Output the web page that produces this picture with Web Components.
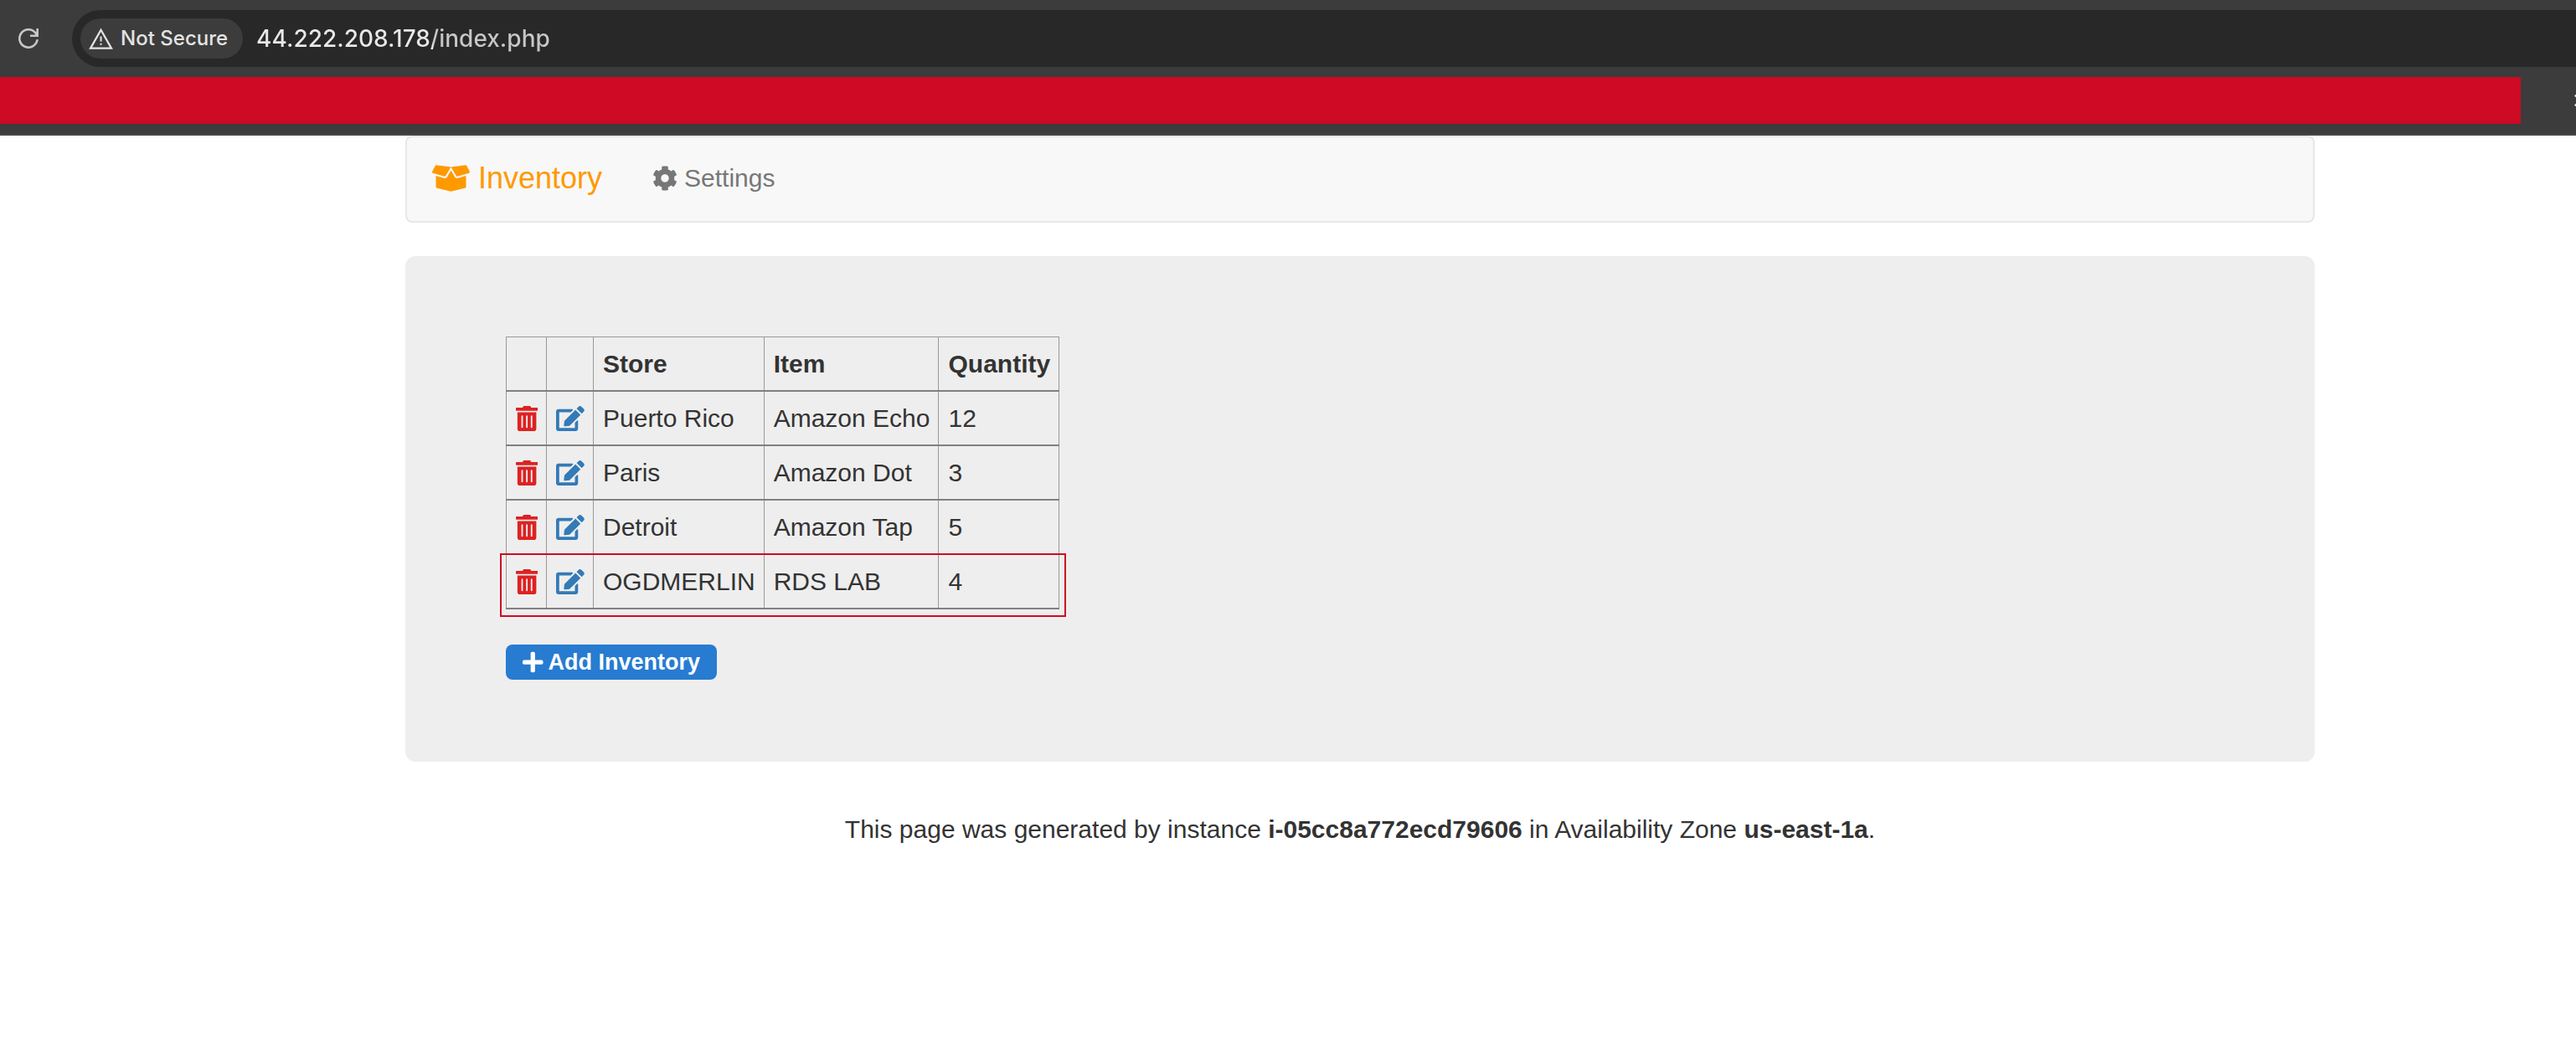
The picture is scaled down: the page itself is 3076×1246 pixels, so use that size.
<!DOCTYPE html>
<html lang="en">
<head>
<meta charset="utf-8">
<title>Inventory</title>
<style>
  body { margin: 0; background: #fff; color: #333; font: 30px/43px "Liberation Sans", Arial, sans-serif; }
</style>
</head>
<body>
<inventory-app></inventory-app>
<script>
const ICONS = {
  box: ['0 0 640 512', '<path d="M425.7 256c-16.9 0-32.8-9-41.4-23.4L320 126l-64.2 106.6c-8.7 14.5-24.6 23.5-41.5 23.5-4.5 0-9-.6-13.3-1.9L64 215v178c0 14.7 10 27.5 24.2 31l216.2 54.1c10.2 2.5 20.9 2.5 31 0L551.8 424c14.2-3.6 24.2-16.4 24.2-31V215l-137 39.1c-4.3 1.3-8.8 1.9-13.3 1.9zm212.6-112.2L586.8 41c-3.1-6.2-9.8-9.8-16.7-8.9L320 64l91.7 152.1c3.8 6.3 11.4 9.3 18.5 7.3l197.9-56.5c9.9-2.9 14.7-13.9 10.2-23.1zM53.2 41L1.7 143.8c-4.6 9.2.3 20.2 10.1 23l197.9 56.5c7.1 2 14.7-1 18.5-7.3L320 64 69.8 32.1c-6.9-.8-13.5 2.7-16.6 8.9z"/>'],
  cog: ['0 0 512 512', '<path d="M487.4 315.7l-42.6-24.6c4.3-23.2 4.3-47 0-70.2l42.6-24.6c4.9-2.8 7.1-8.6 5.5-14-11.1-35.6-30-67.8-54.7-94.6-3.8-4.1-10-5.1-14.8-2.3L380.8 110c-17.9-15.4-38.5-27.3-60.8-35.1V25.8c0-5.6-3.9-10.5-9.4-11.7-36.7-8.2-74.3-7.8-109.2 0-5.5 1.2-9.4 6.1-9.4 11.7V75c-22.2 7.9-42.8 19.8-60.8 35.1L88.7 85.5c-4.9-2.8-11-1.9-14.8 2.3-24.7 26.7-43.6 58.9-54.7 94.6-1.7 5.4.6 11.2 5.5 14L67.3 221c-4.3 23.2-4.3 47 0 70.2l-42.6 24.6c-4.9 2.8-7.1 8.6-5.5 14 11.1 35.6 30 67.8 54.7 94.6 3.8 4.1 10 5.1 14.8 2.3l42.6-24.6c17.9 15.4 38.5 27.3 60.8 35.1v49.2c0 5.6 3.9 10.5 9.4 11.7 36.7 8.2 74.3 7.8 109.2 0 5.5-1.2 9.4-6.1 9.4-11.7v-49.2c22.2-7.9 42.8-19.8 60.8-35.1l42.6 24.6c4.9 2.8 11 1.9 14.8-2.3 24.7-26.7 43.6-58.9 54.7-94.6 1.5-5.5-.7-11.3-5.6-14.1zM256 336c-44.1 0-80-35.9-80-80s35.9-80 80-80 80 35.9 80 80-35.9 80-80 80z"/>'],
  trash: ['0 0 448 512', '<path d="M32 464a48 48 0 0 0 48 48h288a48 48 0 0 0 48-48V128H32zm272-256a16 16 0 0 1 32 0v224a16 16 0 0 1-32 0zm-96 0a16 16 0 0 1 32 0v224a16 16 0 0 1-32 0zm-96 0a16 16 0 0 1 32 0v224a16 16 0 0 1-32 0zM432 32H312l-9.4-18.7A24 24 0 0 0 281.1 0H166.8a23.72 23.72 0 0 0-21.4 13.3L136 32H16A16 16 0 0 0 0 48v32a16 16 0 0 0 16 16h416a16 16 0 0 0 16-16V48a16 16 0 0 0-16-16z"/>'],
  edit: ['0 0 576 512', '<path d="M402.6 83.2l90.2 90.2c3.8 3.8 3.8 10 0 13.8L274.4 405.6l-92.8 10.3c-12.4 1.4-22.9-9.1-21.5-21.5l10.3-92.8L388.8 83.2c3.8-3.8 10-3.8 13.8 0zm162-22.9l-48.8-48.8c-15.2-15.2-39.9-15.2-55.2 0l-35.4 35.4c-3.8 3.8-3.8 10 0 13.8l90.2 90.2c3.8 3.8 10 3.8 13.8 0l35.4-35.4c15.2-15.3 15.2-40 0-55.2zM384 346.2V448H64V128h229.8c3.2 0 6.2-1.3 8.5-3.5l40-40c7.6-7.6 2.2-20.5-8.5-20.5H48C21.5 64 0 85.5 0 112v352c0 26.5 21.5 48 48 48h352c26.5 0 48-21.5 48-48V306.2c0-10.7-12.9-16-20.5-8.5l-40 40c-2.2 2.3-3.5 5.3-3.5 8.5z"/>'],
  plus: ['0 0 448 512', '<path d="M416 208H272V64c0-17.67-14.33-32-32-32h-32c-17.67 0-32 14.33-32 32v144H32c-17.67 0-32 14.33-32 32v32c0 17.67 14.33 32 32 32h144v144c0 17.67 14.33 32 32 32h32c17.67 0 32-14.33 32-32V304h144c17.67 0 32-14.33 32-32v-32c0-17.67-14.33-32-32-32z"/>'],
  reload: ['0 0 24 24', '<path d="M22.600 13.200A10.700 10.700 0 1 1 20.600 5.600L22 8M22.700 0V8.700H14" fill="none" stroke="currentColor" stroke-width="2.600"/>'],
  warning: ['0 0 28 26', '<path d="M14 2.600L26 23.700H2z" fill="none" stroke="currentColor" stroke-width="2.200"/><path d="M13 10h2v6h-2zm0 8h2v2h-2z"/>'],
  chevrons: ['0 0 24 20', '<path d="M2 3l7 7-7 7M12 3l7 7-7 7" fill="none" stroke="currentColor" stroke-width="2.600"/>']
};

/* Base class: renders a style and markup into an open shadow root. */
class Base extends HTMLElement {
  constructor() {
    super();
    this.attachShadow({ mode: 'open' });
  }
  connectedCallback() {
    const t = document.createElement('template');
    t.innerHTML = this.render();
    this.shadowRoot.replaceChildren(t.content.cloneNode(true));
  }
}

customElements.define('ui-icon', class extends Base {
  render() {
    const [box, art] = ICONS[this.getAttribute('name')];
    return `<style>
      :host { display: inline-flex; flex: none; }
      svg { display: block; height: var(--icon-size, 30px); fill: currentColor; }
    </style><svg viewBox="${box}" aria-hidden="true">${art}</svg>`;
  }
});

customElements.define('browser-bar', class extends Base {
  render() {
    return `<style>
      :host { display: block; background: #3c3c3c; border-bottom: 2px solid #484646; font-family: Inter, "Liberation Sans", sans-serif; overflow: hidden; }
      button { all: unset; display: flex; align-items: center; box-sizing: border-box; cursor: pointer; }
      .row { display: flex; align-items: center; padding-top: 12px; }
      .reload { --icon-size: 24px; width: 86px; padding-left: 22px; color: #c7c7c7; }
      .field { flex: 1; display: flex; align-items: center; gap: 16px; height: 68px; padding-left: 10px; background: #282828; border-radius: 34px 0 0 34px; }
      .chip { --icon-size: 27px; gap: 9px; height: 48px; padding: 0 18px 0 10px; border-radius: 24px; background: #3c3c3c; color: #e3e3e3; font-size: 24px; font-weight: 500; line-height: 30px; }
      input { flex: 1; min-width: 0; height: 48px; padding: 0; border: 0; outline: 0; font: 500 28px/34px Inter, "Liberation Sans", sans-serif; color: #e3e3e3;
        background: linear-gradient(90deg, #e8e8e8 211px, #c7c7c7 211px); -webkit-background-clip: text; background-clip: text; -webkit-text-fill-color: transparent; }
      .marks { display: flex; align-items: center; justify-content: space-between; padding: 12px 0; }
      .redacted { flex: 1; height: 56px; background: #ce0a24; border-radius: 0 2px 2px 0; }
      .more { --icon-size: 18px; width: 66px; padding-left: 63px; color: #e3e3e3; overflow: hidden; }
    </style>
    <div class="row">
      <button class="reload" aria-label="Reload"><ui-icon name="reload"></ui-icon></button>
      <div class="field">
        <button class="chip"><ui-icon name="warning"></ui-icon>Not Secure</button>
        <input type="text" aria-label="Address" value="44.222.208.178/index.php">
      </div>
    </div>
    <div class="marks">
      <div class="redacted"></div>
      <button class="more" aria-label="More bookmarks"><ui-icon name="chevrons"></ui-icon></button>
    </div>`;
  }
});

customElements.define('site-nav', class extends Base {
  render() {
    return `<style>
      :host { display: block; }
      nav { display: flex; align-items: center; gap: 60px; box-sizing: border-box; height: 104px; padding: 0 30px 3px; background: #f8f8f8; border: 2px solid #e7e7e7; border-radius: 8px; }
      a { display: flex; align-items: center; gap: 8px; color: #777; text-decoration: none; }
      a.brand { --icon-size: 36px; gap: 10px; color: #f90; font-size: 36px; }
    </style>
    <nav>
      <a class="brand" href="#inventory"><ui-icon name="box"></ui-icon>Inventory</a>
      <a href="#settings"><ui-icon name="cog"></ui-icon>Settings</a>
    </nav>`;
  }
});

customElements.define('inventory-table', class extends Base {
  render() {
    const rows = [
      ['Puerto Rico', 'Amazon Echo', 12],
      ['Paris', 'Amazon Dot', 3],
      ['Detroit', 'Amazon Tap', 5],
      ['OGDMERLIN', 'RDS LAB', 4]
    ];
    return `<style>
      :host { display: block; position: relative; width: fit-content; }
      table { border-collapse: collapse; }
      th, td { padding: 10px 10px 10px 11px; text-align: left; border: 1px solid #999; border-bottom: 2px solid #808080; }
      button { all: unset; display: flex; cursor: pointer; }
      .delete { color: #dd2222; }
      .edit { color: #337ab7; }
      .mark { position: absolute; left: -7px; right: -8px; bottom: -9px; height: 72px; border: 2px solid #ce0a24; pointer-events: none; }
    </style>
    <table>
      <thead><tr><th></th><th></th><th>Store</th><th>Item</th><th>Quantity</th></tr></thead>
      <tbody>${rows.map(([store, item, n]) => `<tr>
        <td><button class="delete" aria-label="Delete ${store}"><ui-icon name="trash"></ui-icon></button></td>
        <td><button class="edit" aria-label="Edit ${store}"><ui-icon name="edit"></ui-icon></button></td>
        <td>${store}</td><td>${item}</td><td>${n}</td></tr>`).join('')}</tbody>
    </table>
    <div class="mark"></div>`;
  }
});

customElements.define('add-button', class extends Base {
  render() {
    return `<style>
      :host { display: block; }
      button { --icon-size: 28px; display: flex; align-items: center; gap: 6px; height: 42px; padding: 0 20px; border: 0; border-radius: 8px; background: #277bd1; color: #fff; font: bold 27px/40px "Liberation Sans", Arial, sans-serif; cursor: pointer; }
    </style><button><ui-icon name="plus"></ui-icon><slot></slot></button>`;
  }
});

customElements.define('panel-box', class extends Base {
  render() {
    return `<style>
      :host { display: flex; flex-direction: column; align-items: flex-start; gap: 42px; padding: 96px 120px 98px; background: #eee; border-radius: 12px; }
    </style><slot></slot>`;
  }
});

customElements.define('inventory-app', class extends Base {
  render() {
    return `<style>
      :host { display: block; }
      main { display: flex; flex-direction: column; gap: 40px; margin: 0 312px 0 484px; }
      p { margin: 19px 0 0; text-align: center; }
    </style>
    <browser-bar></browser-bar>
    <main>
      <site-nav></site-nav>
      <panel-box>
        <inventory-table></inventory-table>
        <add-button>Add Inventory</add-button>
      </panel-box>
      <p>This page was generated by instance <b>i-05cc8a772ecd79606</b> in Availability Zone <b>us-east-1a</b>.</p>
    </main>`;
  }
});
</script>
</body>
</html>
